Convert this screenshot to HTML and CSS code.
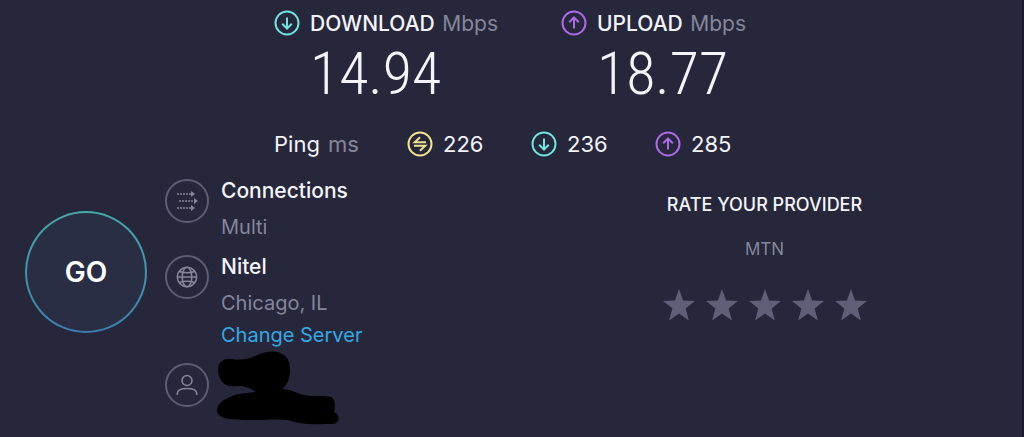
FILE: index.html
```html
<!DOCTYPE html>
<html lang="en">

<head>
    <meta charset="UTF-8" />
    <meta name="viewport" content="width=device-width, initial-scale=1" />
    <title>Speed test</title>
    <link rel="stylesheet" href="styles.css">
</head>

<body>
    <!-- Shared icon shapes -->
    <svg class="sprite" aria-hidden="true">
        <symbol id="arrow-down" viewBox="0 0 26 26">
            <circle cx="13" cy="13" r="11.5" />
            <path d="M13 7.5v11M8.2 13.8l4.8 4.7 4.8-4.7" />
        </symbol>
        <symbol id="arrow-up" viewBox="0 0 26 26">
            <circle cx="13" cy="13" r="11.5" />
            <path d="M13 18.5v-11M8.2 12.2l4.8-4.7 4.8 4.7" />
        </symbol>
        <symbol id="star" viewBox="0 0 32 32">
            <path d="M16 0l4.1 11.6 11.9.3-9.4 7.5 3.3 12.1L16 24.6 6.1 31.5l3.3-12.1L0 11.9l11.9-.3z" />
        </symbol>
    </svg>

    <header class="results">
        <div class="speeds">
            <section class="speed">
                <svg class="icon icon-download"><use href="#arrow-down" /></svg>
                <div>
                    <h2>DOWNLOAD <span class="unit">Mbps</span></h2>
                    <p class="value">14.94</p>
                </div>
            </section>
            <section class="speed">
                <svg class="icon icon-upload"><use href="#arrow-up" /></svg>
                <div>
                    <h2>UPLOAD <span class="unit">Mbps</span></h2>
                    <p class="value">18.77</p>
                </div>
            </section>
        </div>
        <div class="pings">
            <div class="ping-label">Ping <span class="unit">ms</span></div>
            <div class="ping">
                <svg class="icon icon-idle" viewBox="0 0 26 26">
                    <circle cx="13" cy="13" r="11.5" />
                    <path d="M19 11.3H7.8l5.2-5M7 14.7h11.2l-5.2 5" />
                </svg>
                226
            </div>
            <div class="ping">
                <svg class="icon icon-download"><use href="#arrow-down" /></svg>
                236
            </div>
            <div class="ping">
                <svg class="icon icon-upload"><use href="#arrow-up" /></svg>
                285
            </div>
        </div>
    </header>

    <main class="panel">
        <div class="server">
            <button class="go" type="button">GO</button>
            <ul class="details">
                <li>
                    <svg class="badge" viewBox="0 0 44 44">
                        <circle class="ring" cx="22" cy="22" r="21" />
                        <path class="dots" d="M12 15h14M14 22h14M12 29h14" />
                        <path class="heads" d="M26 12l4 3-4 3zM29 19l4 3-4 3zM26 26l4 3-4 3z" />
                    </svg>
                    <div>
                        <h3>Connections</h3>
                        <p>Multi</p>
                    </div>
                </li>
                <li>
                    <svg class="badge" viewBox="0 0 44 44">
                        <circle class="ring" cx="22" cy="22" r="21" />
                        <circle cx="22" cy="22" r="9.7" />
                        <ellipse cx="22" cy="22" rx="4.8" ry="9.7" />
                        <path d="M12.3 22h19.4" />
                        <path d="M14.5 16.5c4 1.6 11 1.6 15 0M14.5 27.5c4-1.6 11-1.6 15 0" />
                    </svg>
                    <div>
                        <h3>Nitel</h3>
                        <p>Chicago, IL</p>
                        <a href="#">Change Server</a>
                    </div>
                </li>
                <li>
                    <svg class="badge" viewBox="0 0 44 44">
                        <circle class="ring" cx="22" cy="22" r="21" />
                        <circle cx="22" cy="17.5" r="5" />
                        <path d="M12.3 32v-1.5c0-3.5 3-5 9.7-5s9.7 1.5 9.7 5V32" />
                    </svg>
                    <svg class="redacted" viewBox="0 0 122 74">
                        <path d="M1 19C1 11 7 7 14 8c9 1 16 1 24-3C46 1 56-1 63 2c8 3 10 9 10 17 0 9-3 15-8 19 8 0 14 4 22 6 9 2 20 0 27 2 5 3 4 10 3 15 4 2 6 6 4 9-2 4-7 3-14 3-13 1-25 0-36-4-16-2-40 2-59-1C5 67 0 64 0 59c0-7 9-12 18-15 7-2 14-2 21-3-4-3-9-5-15-6-6 0-11 1-15-1-5-3-8-9-8-15z" />
                    </svg>
                </li>
            </ul>
        </div>

        <section class="rating">
            <h3>RATE YOUR PROVIDER</h3>
            <p>MTN</p>
            <div class="stars">
                <button type="button" aria-label="1 star"><svg><use href="#star" /></svg></button>
                <button type="button" aria-label="2 stars"><svg><use href="#star" /></svg></button>
                <button type="button" aria-label="3 stars"><svg><use href="#star" /></svg></button>
                <button type="button" aria-label="4 stars"><svg><use href="#star" /></svg></button>
                <button type="button" aria-label="5 stars"><svg><use href="#star" /></svg></button>
            </div>
        </section>
    </main>
</body>

</html>
```

FILE: styles.css
```css
* {
    margin: 0;
    padding: 0;
    box-sizing: border-box;
}

body {
    font-family: Inter, "Open Sans", sans-serif;
    font-size: 21px;
    line-height: 32px;
    color: #f4f4fa;
    background: #26273b;
    min-height: 100vh;
    border-right: 2px solid #1a1930;
}

h2,
h3 {
    font-size: inherit;
    font-weight: 500;
}

.sprite {
    position: absolute;
    width: 0;
    height: 0;
}

.unit {
    margin-left: 2px;
    color: #85869a;
    font-weight: 400;
}

/* Results at the top */
.results {
    max-width: 474px;
    margin: 0 auto;
    padding-top: 8px;
}

.speeds {
    display: grid;
    grid-template-columns: 287px 1fr;
}

.speed {
    display: flex;
    gap: 10px;
    white-space: nowrap;
}

.speed .icon {
    margin-top: 2px;
}

.icon {
    width: 26px;
    height: 26px;
    flex: none;
    fill: none;
    stroke-width: 2;
}

.icon-download {
    stroke: #6fe3df;
}

.icon-upload {
    stroke: #ad69ea;
}

.icon-idle {
    stroke: #f3e58d;
}

.value {
    font-family: "Roboto Condensed", "Liberation Sans Narrow", Roboto, sans-serif;
    font-size: 60px;
    font-weight: 300;
    line-height: 68px;
}

.pings {
    display: grid;
    grid-template-columns: 133px 124px 124px 1fr;
    align-items: center;
    margin-top: 20px;
}

.ping-label,
.ping {
    font-size: 22px;
}

.ping {
    display: flex;
    align-items: center;
    gap: 10px;
}

/* Server and rating */
.panel {
    display: grid;
    grid-template-columns: 1fr 1fr;
    padding-top: 15px;
}

.server {
    display: flex;
    gap: 18px;
    padding-left: 25px;
}

.go {
    width: 122px;
    height: 122px;
    flex: none;
    margin-top: 36px;
    border: 2px solid transparent;
    border-radius: 50%;
    background: linear-gradient(#292e45, #292e45) padding-box, linear-gradient(#45aaa8, #3a7fae) border-box;
    color: #fff;
    font: inherit;
    font-size: 28px;
    font-weight: 600;
}

.details {
    list-style: none;
}

.details li {
    display: flex;
    gap: 12px;
    margin-bottom: 8px;
}

.details h3 {
    margin-bottom: 4px;
}

.details p,
.details a {
    display: block;
    font-size: 20px;
}

.details p {
    color: #85869a;
}

.details a {
    color: #33a9e6;
    text-decoration: none;
}

.badge {
    width: 44px;
    height: 44px;
    flex: none;
    margin-top: 4px;
    fill: none;
    stroke: #85869a;
    stroke-width: 1.5;
}

.badge .ring {
    stroke: #5d5e73;
    stroke-width: 2;
}

.badge .dots {
    stroke-dasharray: 2 1;
}

.badge .heads {
    fill: #85869a;
    stroke: none;
}

.redacted {
    width: 122px;
    height: 74px;
    margin: -8px 0 0 -4px;
    fill: #000;
}

.rating {
    padding: 14px 4px 0 0;
    text-align: center;
}

.rating h3 {
    font-size: 18px;
}

.rating p {
    margin-top: 12px;
    font-size: 17px;
    color: #85869a;
}

.stars {
    display: flex;
    justify-content: center;
    gap: 11px;
    margin-top: 24px;
}

.stars button {
    border: 0;
    background: none;
    line-height: 0;
}

.stars svg {
    width: 32px;
    height: 32px;
    fill: #5f6077;
}
```
